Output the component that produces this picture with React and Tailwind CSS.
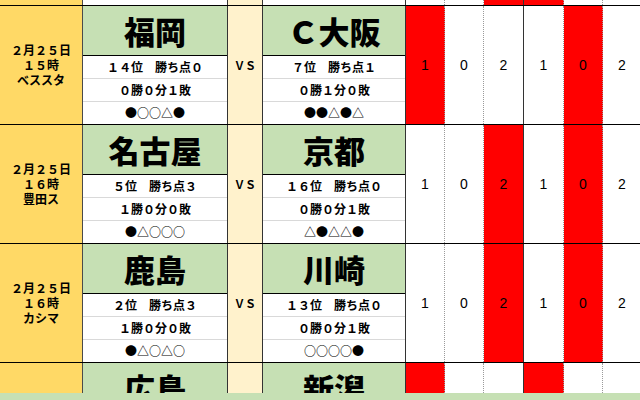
import React from "react";

const NUM_W = ["w-[39px]", "w-[39px]", "w-[40px]", "w-[40px]", "w-[39px]", "w-[39px]"];
const NUM_B = [
  "border-r border-dotted border-[#9a9a9a]",
  "border-r border-dotted border-[#9a9a9a]",
  "border-r border-[#333]",
  "border-r border-dotted border-[#9a9a9a]",
  "border-r border-dotted border-[#9a9a9a]",
  "border-r border-[#333]",
];
const NUMS = ["1", "0", "2", "1", "0", "2"];

const matches = [
  {
    date: ["２月２５日", "１５時", "ベススタ"],
    home: { name: "福岡", rank: "１４位　勝ち点０", rec: "０勝０分１敗", form: "●○○△●" },
    away: { name: "Ｃ大阪", rank: "７位　勝ち点１", rec: "０勝１分０敗", form: "●●△●△" },
    reds: [0, 4],
  },
  {
    date: ["２月２５日", "１６時", "豊田ス"],
    home: { name: "名古屋", rank: "５位　勝ち点３", rec: "１勝０分０敗", form: "●△○○○" },
    away: { name: "京都", rank: "１６位　勝ち点０", rec: "０勝０分１敗", form: "△●△△●" },
    reds: [2, 4],
  },
  {
    date: ["２月２５日", "１６時", "カシマ"],
    home: { name: "鹿島", rank: "２位　勝ち点３", rec: "１勝０分０敗", form: "●△○△○" },
    away: { name: "川崎", rank: "１３位　勝ち点０", rec: "０勝０分１敗", form: "○○○○●" },
    reds: [2, 4],
  },
  {
    date: [],
    home: { name: "広島", rank: "", rec: "", form: "" },
    away: { name: "新潟", rank: "", rec: "", form: "" },
    reds: [0, 3],
    partial: true,
  },
];

function Team({ t, w }) {
  return (
    <div className={`${w} shrink-0 flex flex-col border-r border-[#333]`}>
      <div className="h-[50px] shrink-0 bg-[#c6e0b4] border-b border-black flex items-center justify-center">
        <span className="text-[31px] leading-none font-black text-black">{t.name}</span>
      </div>
      <div className="h-[23px] shrink-0 bg-white border-b border-[#d9d9d9] flex items-center justify-center text-[12px] leading-[14px] font-bold text-black">
        {t.rank}
      </div>
      <div className="h-[23px] shrink-0 bg-white border-b border-[#d9d9d9] flex items-center justify-center text-[12px] leading-[14px] font-bold text-black">
        {t.rec}
      </div>
      <div className="h-[22px] shrink-0 bg-white flex items-center justify-center text-[12px] leading-[14px] font-bold text-black">
        {t.form}
      </div>
    </div>
  );
}

function Nums({ reds, show }) {
  return (
    <>
      {NUMS.map((n, i) => (
        <div
          key={i}
          className={`${NUM_W[i]} ${NUM_B[i]} shrink-0 flex items-center justify-center font-['Liberation_Sans',sans-serif] text-[14px] leading-none text-black ${
            reds.includes(i) ? "bg-[#ff0000]" : "bg-white"
          }`}
        >
          {show ? n : ""}
        </div>
      ))}
    </>
  );
}

function MatchRow({ m }) {
  return (
    <div className="h-[119px] shrink-0 flex border-t border-black">
      <div className="w-[83px] shrink-0 bg-[#ffd966] border-r border-[#4a4a4a] flex flex-col items-center justify-center text-[12px] leading-[15px] font-bold text-black pb-[1px]">
        {m.date.map((d, i) => (
          <div key={i} className="h-[15px] leading-[15px]">
            {d}
          </div>
        ))}
      </div>
      <Team t={m.home} w="w-[145px]" />
      <div className="w-[35px] shrink-0 bg-[#fff2cc] border-r border-[#333] flex items-center justify-center text-[11px] leading-none font-bold text-black">
        {m.partial ? "" : "ＶＳ"}
      </div>
      <Team t={m.away} w="w-[143px]" />
      <Nums reds={m.reds} show={!m.partial} />
    </div>
  );
}

export default function App() {
  return (
    <div className="w-[640px] h-[400px] overflow-hidden bg-[#c6e0b4] flex flex-col font-['Noto_Sans_CJK_JP','Noto_Sans',sans-serif]">
      <div className="h-[393px] shrink-0 overflow-hidden flex flex-col">
        <div className="h-[5px] shrink-0 flex">
          <div className="w-[83px] shrink-0 bg-[#ffd966] border-r border-[#4a4a4a]" />
          <div className="w-[145px] shrink-0 bg-white border-r border-[#333]" />
          <div className="w-[35px] shrink-0 bg-[#fff2cc] border-r border-[#333]" />
          <div className="w-[143px] shrink-0 bg-white border-r border-[#333]" />
          <Nums reds={[2, 3]} show={false} />
        </div>
        {matches.map((m, i) => (
          <MatchRow key={i} m={m} />
        ))}
      </div>
      <div className="flex-1 bg-[#c6e0b4]" />
    </div>
  );
}
